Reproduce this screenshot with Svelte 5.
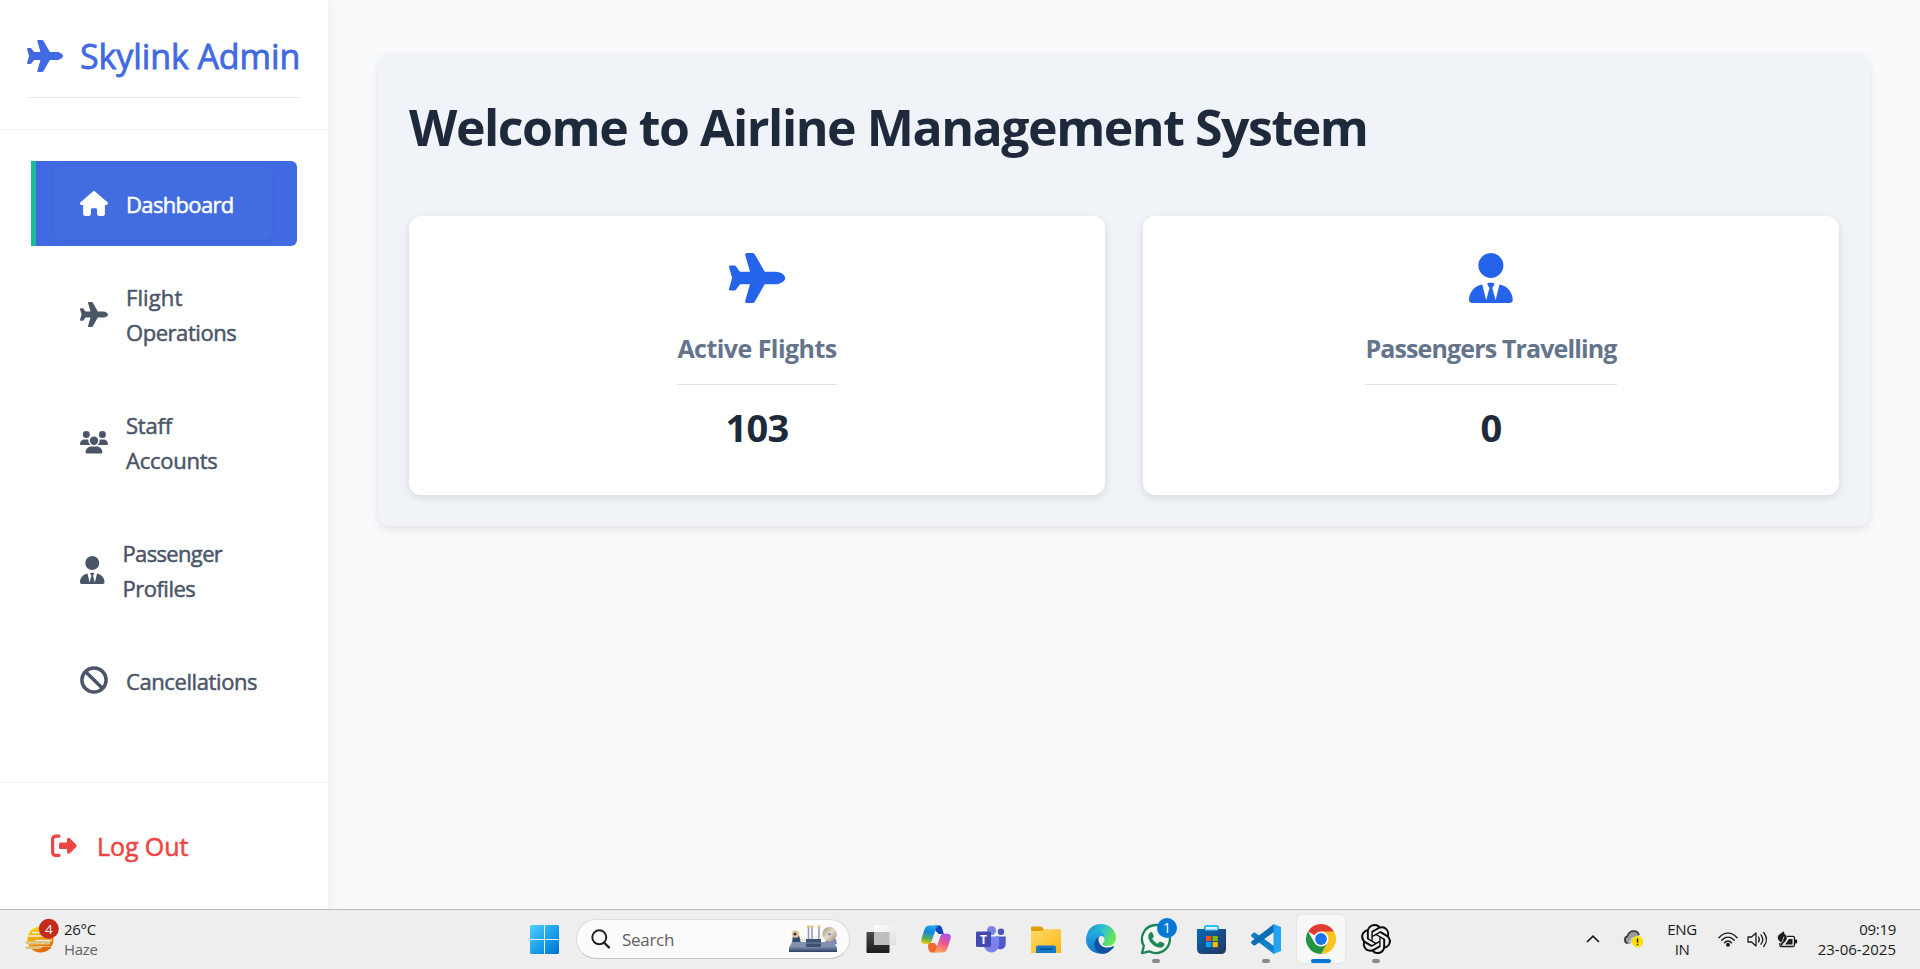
<script>
  const plane = 'M482.3 192c34.2 0 93.7 29 93.7 64c0 36-59.5 64-93.7 64l-116.6 0L265.2 495.9c-5.7 10-16.3 16.1-27.8 16.1l-56.2 0c-10.6 0-18.3-10.2-15.4-20.4l49-171.6L112 320 68.8 377.6c-3 4-7.8 6.4-12.8 6.4l-42 0c-7.8 0-14-6.3-14-14c0-1.3 .2-2.6 .5-3.9L32 256 .5 145.9c-.4-1.3-.5-2.6-.5-3.9c0-7.8 6.3-14 14-14l42 0c5 0 9.8 2.4 12.8 6.4L112 192l102.9 0-49-171.6C162.9 10.2 170.6 0 181.2 0l56.2 0c11.5 0 22.1 6.2 27.8 16.1L365.7 192l116.6 0z';
  const tie = 'M224 256A128 128 0 1 1 224 0a128 128 0 1 1 0 256zM209.1 359.2l-18.6-31c-6.4-10.7 1.3-24.2 13.7-24.2H224h19.7c12.4 0 20.1 13.6 13.7 24.2l-18.6 31 33.4 123.9 39.5-161.2c77.2 12 136.3 78.8 136.3 159.4c0 17-13.8 30.7-30.7 30.7H265.1 182.9 30.7C13.8 512 0 498.2 0 481.3c0-80.6 59.1-147.4 136.3-159.4l39.5 161.2 33.4-123.9z';
  const house = 'M575.8 255.5c0 18-15 32.1-32 32.1h-32l.7 160.2c0 2.7-.2 5.4-.5 8.1V472c0 22.1-17.9 40-40 40H456c-1.1 0-2.2 0-3.3-.1c-1.4 .1-2.8 .1-4.2 .1H416 392c-22.1 0-40-17.9-40-40V448 384c0-17.7-14.3-32-32-32H256c-17.7 0-32 14.3-32 32v64 24c0 22.1-17.9 40-40 40H160 128.1c-1.5 0-3-.1-4.5-.2c-1.2 .1-2.4 .2-3.6 .2H104c-22.1 0-40-17.9-40-40V360c0-.9 0-1.9 .1-2.8V287.6H32c-18 0-32-14-32-32.1c0-9 3-17 10-24L266.4 8c7-7 15-8 22-8s15 2 21 7L564.8 231.5c8 7 12 15 11 24z';
  const users = 'M144 0a80 80 0 1 1 0 160A80 80 0 1 1 144 0zM512 0a80 80 0 1 1 0 160A80 80 0 1 1 512 0zM0 298.7C0 239.8 47.8 192 106.7 192h42.7c15.9 0 31 3.5 44.6 9.7c-1.3 7.2-1.9 14.7-1.9 22.3c0 38.2 16.8 72.5 43.3 96c-.2 0-.4 0-.7 0H21.3C9.6 320 0 310.4 0 298.7zM405.3 320c-.2 0-.4 0-.7 0c26.6-23.5 43.3-57.8 43.3-96c0-7.6-.7-15-1.9-22.3c13.6-6.3 28.7-9.7 44.6-9.7h42.7C592.2 192 640 239.8 640 298.7c0 11.8-9.6 21.3-21.3 21.3H405.3zM224 224a96 96 0 1 1 192 0 96 96 0 1 1 -192 0zM128 485.3C128 411.7 187.7 352 261.3 352H378.7C452.3 352 512 411.7 512 485.3c0 14.7-11.9 26.7-26.7 26.7H154.7c-14.7 0-26.7-11.9-26.7-26.7z';
  const logout = 'M377.9 105.9L500.7 228.7c7.2 7.2 11.3 17.1 11.3 27.3s-4.1 20.1-11.3 27.3L377.9 406.1c-6.4 6.4-15 9.9-24 9.9c-18.7 0-33.9-15.2-33.9-33.9l0-62.1-128 0c-17.7 0-32-14.3-32-32l0-64c0-17.7 14.3-32 32-32l128 0 0-62.1c0-18.7 15.2-33.9 33.9-33.9c9 0 17.6 3.6 24 9.9zM160 96L96 96c-17.7 0-32 14.3-32 32l0 256c0 17.7 14.3 32 32 32l64 0c17.7 0 32 14.3 32 32s-14.3 32-32 32l-64 0c-53 0-96-43-96-96L0 128C0 75 43 32 96 32l64 0c17.7 0 32 14.3 32 32s-14.3 32-32 32z';

  const nav = [
    { lines: [['Dashboard', -0.65]], icon: house, box: '0 0 576 512', w: 28, h: 25, active: true },
    { lines: [['Flight', 0.1], ['Operations', -0.45]], icon: plane, box: '0 0 576 512', w: 28, h: 25 },
    { lines: [['Staff', -0.2], ['Accounts', -0.25]], icon: users, box: '0 0 640 512', w: 28, h: 22.4 },
    { lines: [['Passenger', -0.65], ['Profiles', -0.5]], icon: tie, box: '0 0 448 512', w: 24.5, h: 28 },
    { lines: [['Cancellations', -0.4]], ban: true, w: 28, h: 28 }
  ];

  const stats = [
    { label: 'Active Flights', value: '103', icon: plane, box: '0 0 576 512', w: 56.25 },
    { label: 'Passengers Travelling', value: '0', icon: tie, box: '0 0 448 512', w: 43.75 }
  ];
</script>

<div class="screen">
  <div class="app">
    <aside>
      <header>
        <div class="brand">
          <svg width="36" height="32" viewBox="0 0 576 512"><path d={plane} /></svg>
          <span>Skylink Admin</span>
        </div>
      </header>
      <nav>
        {#each nav as item}
          <a class:active={item.active} class="item">
            <span class="inner">
              {#if item.ban}
                <svg class="ban" width="28" height="28" viewBox="0 0 28 28" fill="none" stroke="currentColor" stroke-width="3.5"><circle cx="14" cy="14" r="12.1" /><path d="M5.4 5.4 22.6 22.6" /></svg>
              {:else}
                <svg width={item.w} height={item.h} viewBox={item.box}><path d={item.icon} /></svg>
              {/if}
              <span class="label">{#each item.lines as [text, tracking]}<span style:letter-spacing="{tracking}px">{text}</span>{/each}</span>
            </span>
          </a>
        {/each}
      </nav>
      <footer>
        <svg width="25.6" height="25.6" viewBox="0 0 512 512"><path d={logout} /></svg>
        <span>Log Out</span>
      </footer>
    </aside>
    <main>
      <section class="panel">
        <h1>Welcome to Airline Management System</h1>
        <div class="stats">
          {#each stats as s}
            <article>
              <svg width={s.w} height="50" viewBox={s.box}><path d={s.icon} /></svg>
              <h2 class:long={s.label.length > 15}>{s.label}</h2>
              <strong>{s.value}</strong>
            </article>
          {/each}
        </div>
      </section>
    </main>
  </div>

  <div class="taskbar">
    <div class="weather">
      <svg width="36" height="38" viewBox="0 0 36 38">
        <defs>
          <linearGradient id="sun" x1="0" y1="0" x2=".4" y2="1"><stop offset="0" stop-color="#fde000" /><stop offset="1" stop-color="#e46a09" /></linearGradient>
        </defs>
        <circle cx="15.5" cy="22.5" r="13" fill="url(#sun)" />
        <g stroke="#eee" stroke-width="1.7" stroke-linecap="round"><path d="M8 15.5h10M4 19h17M11 23.5h15M4 26.5h20M12 30h14" /></g>
        <g stroke="#dcc283" stroke-width="2.8" stroke-linecap="round"><path d="M2 25.5h14M2 30.7h12M19 25.5h5" /></g>
        <path d="M17 30.7h9" stroke="#df6b0b" stroke-width="2" />
        <circle cx="23.8" cy="11.8" r="10" fill="#c42b1c" />
        <text x="23.8" y="16.6" text-anchor="middle" fill="#fff" font-size="13.5">4</text>
      </svg>
      <div class="two"><span>26°C</span><span class="dim">Haze</span></div>
    </div>

    <div class="dock">
      <div class="slot">
        <svg width="29" height="29" viewBox="0 0 29 29">
          <defs><linearGradient id="win" gradientUnits="userSpaceOnUse" x1="0" y1="0" x2="29" y2="29"><stop offset="0" stop-color="#4fd0fc" /><stop offset=".6" stop-color="#149ae8" /><stop offset="1" stop-color="#0071ce" /></linearGradient></defs>
          <path fill="url(#win)" d="M1 0h13v14H0V1zM15 0h13l1 1v13H15zM0 15h14v14H1l-1-1zM15 15h14v13l-1 1H15z" />
        </svg>
      </div>
      <div class="search">
        <svg width="19" height="20" viewBox="0 0 19 20" fill="none" stroke="#222" stroke-width="2"><circle cx="8.3" cy="8.3" r="7" /><path d="m13 13.5 5 5" stroke-width="2.4" stroke-linecap="round" /></svg>
        <span>Search</span>
        <svg class="art" width="50" height="28" viewBox="0 0 50 28">
          <defs>
            <linearGradient id="base" x1="0" y1="0" x2="0" y2="1"><stop offset="0" stop-color="#7b8ba9" /><stop offset="1" stop-color="#2b4266" /></linearGradient>
            <linearGradient id="disc" x1="0" y1="0" x2="1" y2="1"><stop offset="0" stop-color="#9b8c72" /><stop offset=".5" stop-color="#e4dccb" /><stop offset="1" stop-color="#8f826d" /></linearGradient>
          </defs>
          <path d="M5 10h6l2 8H4z" fill="#344a6c" />
          <circle cx="7.5" cy="9" r="3.8" fill="#ddc99e" /><circle cx="7" cy="9" r="1.5" fill="#332d2b" />
          <path d="M12 14q3 3 6 0" fill="none" stroke="#d8c79f" />
          <path d="M20.5 2v13M24 2v13M31 2v13" stroke="#9099ad" stroke-width="1.5" />
          <path d="M19 1.6h6.5M29.5 1.6h3" stroke="#e7c47b" stroke-width="2" />
          <path d="M38 14h10l1 5H37z" fill="#7e8cab" />
          <circle cx="41.5" cy="9.2" r="7.2" fill="url(#disc)" /><circle cx="41.5" cy="9.2" r="1.8" fill="#c8c0d5" /><circle cx="41.5" cy="9.2" r=".8" fill="#4a3c66" />
          <path d="M4 17h42l3 6H1z" fill="#8390ac" />
          <path d="M18 14h15v8H18z" fill="#3c5275" /><path d="M18 18h15" stroke="#7687a7" />
          <path d="M1 22h48v5H1z" fill="url(#base)" />
        </svg>
      </div>
      <div class="slot">
        <svg width="30" height="30" viewBox="0 0 30 30">
          <defs><linearGradient id="tv" x1="0" y1="0" x2="0" y2="1"><stop offset="0" stop-color="#4c4b48" /><stop offset="1" stop-color="#1b1b1a" /></linearGradient><linearGradient id="tw" x1="0" y1="0" x2="1" y2="1"><stop offset="0" stop-color="#fff" /><stop offset="1" stop-color="#dedede" /></linearGradient></defs>
          <rect x=".5" y="8" width="23" height="21" rx="1" fill="url(#tv)" />
          <rect x="8" y="1" width="22" height="20" rx="1" fill="url(#tw)" /><rect x="8" y="8" width="15.5" height="13" fill="#bebebe" />
        </svg>
      </div>
      <div class="slot">
        <svg width="30" height="28" viewBox="0 0 30 28">
          <defs>
            <linearGradient id="c1" x1=".4" y1="0" x2=".2" y2="1"><stop offset="0" stop-color="#1aa5ed" /><stop offset=".35" stop-color="#1287dd" /><stop offset=".7" stop-color="#5aae57" /><stop offset="1" stop-color="#f5c509" /></linearGradient>
            <linearGradient id="c2" x1=".7" y1="0" x2=".4" y2="1"><stop offset="0" stop-color="#a950ec" /><stop offset=".5" stop-color="#ee5a8c" /><stop offset="1" stop-color="#fba263" /></linearGradient>
          </defs>
          <path d="M14 .5h3.500c3 0 3.500 2 4.200 4.500l1 4h-5L14 5z" fill="#1540bd" />
          <path d="M7 22.500 7.500 18h6l4 5-1.500 4.500h-5c-2.500 0-3.200-2.500-4-5z" fill="#f3682f" />
          <path d="M8.500.5H18c-2 .6-3 2.500-3.700 5L11 15.200c-1 3-2 3.600-5 3.600H3.500C.5 18.800-.2 16 .5 13.500L3.300 5C4.300 2 5.500.5 8.500.5z" fill="url(#c1)" />
          <path d="M21.500 27.500H12c2-.6 3-2.500 3.700-5L19 12.300c1-3 2-3.500 5-3.500h2.500c3 0 3.800 2.700 3 5.200L26.700 22.500c-1 3.400-2.200 5-5.200 5z" fill="url(#c2)" />
        </svg>
      </div>
      <div class="slot">
        <svg width="30" height="27" viewBox="0 0 30 27">
          <circle cx="25" cy="5.800" r="3.200" fill="#4b53bc" /><path d="M20 10.500h9.700v7.500a5.300 5.300 0 0 1-9.700 3z" fill="#5059c9" />
          <circle cx="15.500" cy="4.500" r="4.500" fill="#7b83eb" /><path d="M8 10.500h15V19a7.500 7.500 0 0 1-15 0z" fill="#7b83eb" />
          <rect x="0" y="5.500" width="15" height="15.500" rx="1.300" fill="#434ab0" />
          <text x="7.500" y="17.700" text-anchor="middle" font-size="12" font-weight="700" fill="#fff">T</text>
        </svg>
      </div>
      <div class="slot">
        <svg width="30" height="27" viewBox="0 0 30 27">
          <defs><linearGradient id="fo" x1="0" y1="0" x2="1" y2="1"><stop offset="0" stop-color="#ffdb68" /><stop offset="1" stop-color="#fbb514" /></linearGradient></defs>
          <path d="M0 6V1.500Q0 .5 1 .5h8.500q1 0 1.600.6L13 3.500V6z" fill="#dea006" />
          <path d="M0 5h10.500l2.500-1.800h17V27H0z" fill="url(#fo)" />
          <path d="M5 27v-5.500q0-2 2-2h16q2 0 2 2V27z" fill="#127ac9" /><path d="M8.500 23h13" stroke="#084c8b" stroke-width="1.400" />
        </svg>
      </div>
      <div class="slot">
        <svg width="30" height="30" viewBox="0 0 30 30">
          <defs>
            <linearGradient id="e1" x1="0" y1=".2" x2="1" y2=".6"><stop offset="0" stop-color="#138fd7" /><stop offset=".5" stop-color="#31c5cf" /><stop offset="1" stop-color="#6de947" /></linearGradient>
            <linearGradient id="e2" x1="0" y1="0" x2="0" y2="1"><stop offset="0" stop-color="#26aee2" /><stop offset="1" stop-color="#1470cd" /></linearGradient>
          </defs>
          <path d="M.5 12.500C1.600 4.500 8 0 15 0c9 0 15 6.500 15 13.500 0 5.500-4 8.500-8.500 8.500-3.500 0-5-1.200-5-2.100 0-.8 2-1.600 2-4.400 0-3-3-5-7-5-5 0-9.500 2-11 4z" fill="url(#e1)" />
          <path d="M0 15c.5-5 6-8 11-8 4.500 0 7.500 3.500 7.500 6-5-3-9 2-7 8 1.500 4.500 4 7.500 7.500 8.400C8 31.500-.5 24 0 15z" fill="url(#e2)" />
          <path d="M12.500 13c-3 2-5.500 5.500-3.500 10.500 1.500 4 5.500 6.500 9 6.200 4-.6 8-3.700 9.800-6.800.3-.7-.2-1-.8-.7-6 3-13 1-14.300-5-.4-1.800-.4-3 .6-4.400z" fill="#124f9c" />
        </svg>
      </div>
      <div class="slot dot">
        <svg width="38" height="38" viewBox="0 0 38 38">
          <path d="M5.600 33.600 7.400 26.500A14 14 0 1 1 12.800 31.800z" transform="translate(-.6 -.5)" fill="#f2f7f3" stroke="#1c8654" stroke-width="2.300" stroke-linejoin="round" />
          <path d="M13.400 12.300c.6-.5 1.600-.4 2 .4l1.300 3c.2.500 0 1-.4 1.500l-1.100 1.300c1.200 2.400 3 4 5.500 5.200l1.500-1.600c.4-.5.900-.6 1.500-.4l2.900 1.400c.8.400.9.900.7 1.600-.7 2.500-3.200 3.400-5.400 2.900-5.200-1.300-9.700-5.500-10.600-10.200-.3-2 .6-4 2.100-5.100z" fill="#1c8654" />
          <circle cx="30" cy="8" r="10" fill="#0078d4" class="badge" />
          <text x="30" y="13" text-anchor="middle" font-size="14" fill="#fff">1</text>
        </svg>
      </div>
      <div class="slot">
        <svg width="29" height="30" viewBox="0 0 29 30">
          <defs><linearGradient id="st" x1="0" y1="0" x2="1" y2="1"><stop offset="0" stop-color="#0767b9" /><stop offset="1" stop-color="#25345a" /></linearGradient></defs>
          <path d="M8 8V3q0-1 1-1h11q1 0 1 1v5" fill="none" stroke="#2dbff2" stroke-width="2" />
          <path d="M0 5h29v20q0 5-5 5H5q-5 0-5-5z" fill="url(#st)" />
          <path d="M8 5.700h13" stroke="#69dcfa" stroke-width="1.500" />
          <path d="M9 12h5.300v5H9z" fill="#f25022" /><path d="M15.500 12h5.300v5h-5.300z" fill="#7fba00" /><path d="M9 18h5.300v5.200H9z" fill="#00a4ef" /><path d="M15.500 18h5.300v5.200h-5.300z" fill="#ffb900" />
        </svg>
      </div>
      <div class="slot dot">
        <svg width="30" height="30" viewBox="0 0 30 30">
          <path d="m.5 10.500 2-1.700q.9-.7 1.800 0L23 22v8L.600 12.700q-1-1-.1-2.200z" fill="#0f7fca" />
          <path d="m.5 19.500 2 1.700q.9.700 1.800 0L23 8V0L.600 17.300q-1 1-.1 2.200z" fill="#0b6eb5" />
          <path d="M22.500 0 30 3v24l-7.500 3z" fill="#23a3f2" />
        </svg>
      </div>
      <div class="slot current dot">
        <svg width="30" height="30" viewBox="0 0 30 30">
          <path d="M15 15 2 7.500A15 15 0 0 1 28 7.500z" fill="#e23c30" />
          <path d="M15 7.500h13A15 15 0 0 1 15 30l6.500-11.300z" fill="#fcc31e" />
          <path d="M2 7.500A15 15 0 0 0 15 30l6.500-11.200L15 15 8.500 18.700z" fill="#229342" />
          <circle cx="15" cy="15" r="7.500" fill="#fff" /><circle cx="15" cy="15" r="5.900" fill="#1f73e8" />
        </svg>
      </div>
      <div class="slot dot">
        <svg width="30" height="30" viewBox="0 0 24 24"><path d="M22.282 9.821a5.985 5.985 0 0 0-.516-4.910 6.046 6.046 0 0 0-6.510-2.900A6.065 6.065 0 0 0 4.981 4.180a5.985 5.985 0 0 0-3.998 2.900 6.046 6.046 0 0 0 .743 7.097 5.980 5.980 0 0 0 .510 4.911 6.051 6.051 0 0 0 6.515 2.900A5.985 5.985 0 0 0 13.260 24a6.056 6.056 0 0 0 5.772-4.206 5.990 5.990 0 0 0 3.998-2.900 6.056 6.056 0 0 0-.748-7.073zM13.260 22.430a4.476 4.476 0 0 1-2.876-1.040l.141-.081 4.779-2.758a.795.795 0 0 0 .393-.681v-6.737l2.020 1.169a.071.071 0 0 1 .038.052v5.583a4.504 4.504 0 0 1-4.495 4.493zM3.600 18.304a4.470 4.470 0 0 1-.535-3.014l.142.085 4.783 2.759a.771.771 0 0 0 .780 0l5.843-3.369v2.332a.080.080 0 0 1-.033.062L9.740 19.950a4.500 4.500 0 0 1-6.140-1.646zM2.340 7.896a4.485 4.485 0 0 1 2.366-1.973V11.600a.766.766 0 0 0 .388.676l5.815 3.355-2.020 1.168a.076.076 0 0 1-.071 0l-4.830-2.786A4.504 4.504 0 0 1 2.340 7.872zm16.597 3.855l-5.833-3.387L15.119 7.200a.076.076 0 0 1 .071 0l4.830 2.791a4.494 4.494 0 0 1-.676 8.105v-5.678a.790.790 0 0 0-.407-.667zm2.010-3.023l-.141-.085-4.774-2.782a.776.776 0 0 0-.785 0L9.409 9.230V6.897a.066.066 0 0 1 .028-.061l4.830-2.787a4.500 4.500 0 0 1 6.680 4.660zm-12.640 4.135l-2.020-1.164a.080.080 0 0 1-.038-.057V6.075a4.500 4.500 0 0 1 7.375-3.453l-.142.080L8.704 5.460a.795.795 0 0 0-.393.681zm1.097-2.365l2.602-1.500 2.607 1.500v2.999l-2.597 1.500-2.607-1.500z" fill="#0a0a0a" /></svg>
      </div>
    </div>

    <div class="tray">
      <svg class="chev" width="14" height="8" viewBox="0 0 14 8" fill="none" stroke="#1b1b1b" stroke-width="1.700"><path d="m1 7 6-5.800L13 7" /></svg>
      <svg class="cloud" width="21" height="18" viewBox="0 0 21 18">
        <path d="M4 13.500a3.800 3.800 0 0 1 0-7.500c1-3.300 3.800-5 6.500-5 2.800 0 4.800 1.500 5.800 4l-9.500 9z" fill="#9a9a9a" />
        <path d="M4.500 13.500a4 4 0 0 1 0-7.500c1-3.300 3.500-5 6.200-5 2.500 0 4.500 1.500 5.500 4" fill="none" stroke="#303030" stroke-width="1.500" />
        <path d="M7 10q3-5 9-3l-3 5.500H5.500z" fill="#cfcfcf" />
        <circle cx="14.500" cy="11.700" r="5.700" fill="#fce100" /><path d="M14.500 8.500v4M14.500 13.800v1.500" stroke="#222" stroke-width="1.500" />
      </svg>
      <div class="two lang"><span>ENG</span><span>IN</span></div>
      <svg class="wifi" width="20" height="15" viewBox="0 0 20 15" fill="none" stroke="#1b1b1b" stroke-width="1.400" stroke-linecap="round"><path d="M1 5.800C6-.4 14-.4 19 5.800M3.800 8.300C7.300 4 12.700 4 16.200 8.300M6.500 10.800c2-2.500 5-2.500 7 0" /><circle cx="10" cy="12.800" r="1.300" fill="#1b1b1b" /></svg>
      <svg class="vol" width="21" height="17" viewBox="0 0 21 17" fill="none" stroke="#1b1b1b" stroke-width="1.300" stroke-linecap="round" stroke-linejoin="round"><path d="M1 6h3.500L9 2v13l-4.500-4H1zM11.500 6q1.700 2.500 0 5M14 3.800q3.500 4.700 0 9.400M16.700 1.500q5.500 7 0 14" /></svg>
      <svg class="bat" width="21" height="17" viewBox="0 0 21 17"><path d="M10 5.300h5.800q1.700 0 1.700 1.700v6.800q0 1.700-1.700 1.700H4.500q-1.700 0-1.700-1.700V12" fill="none" stroke="#1b1b1b" stroke-width="1.300" /><path d="M18 8.500h1q1.200 0 1.200 1v2q0 1-1.200 1h-1zM8 13.500l4-5.500h3.500v5.500zM4.500 11.500C-.5 9 0 4.500 3 3L6.800.2 7.500 3C11 5 10.500 9.500 6.500 12l-1.500 2.500-1.500-.5z" fill="#1b1b1b" /><path d="M7 5.500Q6 9 4.800 11.500" fill="none" stroke="#eee" stroke-width=".8" /></svg>
      <div class="two clock"><span>09:19</span><span class="date">23-06-2025</span></div>
    </div>
  </div>
</div>

<style>
  :global(body) { margin: 0; overflow: hidden; }
  .screen { width: 1920px; height: 969px; display: flex; flex-direction: column; font-family: 'Open Sans', 'Noto Sans', sans-serif; background: #f9fafc; }
  svg { display: block; flex: none; overflow: visible; }
  .app { flex: 1; min-height: 0; display: flex; }
  aside { width: 328px; box-sizing: border-box; flex: none; background: #fff; display: flex; flex-direction: column; box-shadow: 2px 0 12px rgba(0, 0, 0, .06); }
  aside svg path, article svg path { fill: currentColor; }
  header { box-sizing: border-box; height: 130px; padding: 27px; border-bottom: 1px solid #eef0f2; }
  .brand { box-sizing: border-box; height: 71px; display: flex; align-items: center; gap: 17px; padding-bottom: 12px; border-bottom: 1px solid #e9eaec; color: #4169e1; white-space: nowrap; }
  .brand span { font-size: 34px; line-height: 48px; letter-spacing: -.1px; -webkit-text-stroke: .8px currentColor; }
  nav { flex: 1; padding: 31px 31px 0; display: flex; flex-direction: column; gap: 8px; color: #4a5568; }
  .item { box-sizing: border-box; border-left: 5px solid transparent; border-radius: 6px; padding: 5px 25px 6px 18px; }
  .item.active { background: #4169e1; border-left-color: #1abc9c; color: #fff; border-radius: 0 6px 6px 0; }
  .active .inner { background: #416de0; border-radius: 8px; box-shadow: 0 2px 4px rgba(40, 70, 160, .08); }
  .inner { display: flex; align-items: center; gap: 18px; padding: 20px 0 19px 26px; }
  .label { display: flex; flex-direction: column; padding-top: 1px; margin-bottom: -1px; font-size: 22px; line-height: 35px; -webkit-text-stroke: .5px currentColor; white-space: nowrap; }
  .item:last-child path { fill: none; }
  .ban { margin-top: -2px; }
  footer { box-sizing: border-box; height: 127px; border-top: 1px solid #eceef0; padding-left: 51px; display: flex; align-items: center; gap: 20.500px; color: #ef4444; }
  footer span { font-size: 25px; letter-spacing: -.1px; -webkit-text-stroke: .55px currentColor; }
  main { flex: 1; padding: 54px 50px 0 50px; }
  .panel { box-sizing: border-box; height: 472px; padding: 35px 31px 31px 31px; background: #f0f4f9; border-radius: 12px; box-shadow: 0 3px 8px rgba(0, 0, 0, .1); }
  h1 { margin: 0 0 50px; height: 77px; line-height: 77px; font-size: 50px; font-weight: 700; color: #1e293b; letter-spacing: -1.460px; white-space: nowrap; }
  .stats { display: grid; grid-template-columns: 1fr 1fr; gap: 38px; }
  article { box-sizing: border-box; height: 279px; padding-top: 37px; display: flex; flex-direction: column; align-items: center; background: #fff; border-radius: 12px; box-shadow: 0 3px 8px rgba(0, 0, 0, .11); color: #2563eb; }
  h2 { margin: 25px 0 0; height: 57px; line-height: 41px; box-sizing: border-box; border-bottom: 1px solid #dfe1e5; font-size: 25px; font-weight: 700; color: #64748b; letter-spacing: -.550px; white-space: nowrap; }
  h2.long { letter-spacing: -.870px; }
  strong { margin-top: 16px; font-size: 38px; line-height: 52px; font-weight: 700; color: #1e293b; letter-spacing: -.7px; }
  .taskbar { box-sizing: border-box; height: 60px; flex: none; padding-bottom: 1px; border-top: 1px solid #b8bbbe; background: #eee; display: flex; align-items: center; color: #1b1b1b; }
  .weather { width: 512px; padding-left: 25px; box-sizing: border-box; display: flex; align-items: center; gap: 3px; }
  .weather svg { margin-top: -7px; }
  .weather .two { margin-top: -1px; letter-spacing: -.3px; }
  .two { display: flex; flex-direction: column; font-size: 15px; line-height: 20px; letter-spacing: -.5px; white-space: nowrap; }
  .dim { color: #636363; }
  .dock { display: flex; align-items: center; gap: 7px; margin-left: 8px; }
  .slot { width: 48px; height: 48px; display: flex; align-items: center; justify-content: center; border-radius: 5px; position: relative; }
  .slot:first-child { margin-right: 1px; }
  .current { background: #f8f8f8; box-shadow: 0 0 0 1px #e5e5e5; }
  .dot::after { content: ''; position: absolute; bottom: 0; left: 20px; width: 8px; height: 4px; border-radius: 2px; background: #8a8a8a; }
  .current::after { left: 14px; width: 20px; background: #0078d4; }
  .search { box-sizing: border-box; width: 274px; height: 40px; border: 1px solid #dcdcdc; border-bottom-color: #c5c5c5; border-radius: 20px; background: #fbfbfb; display: flex; align-items: center; padding: 0 11px 0 14px; }
  .search span { margin-left: 12px; font-size: 17px; letter-spacing: -.3px; color: #5f5f5f; }
  .art { margin-left: auto; }
  .tray { margin-left: auto; display: flex; align-items: center; padding-right: 24px; }
  .chev { margin-right: 23px; }
  .cloud { margin-right: 23px; }
  .lang { width: 30px; align-items: center; margin-right: 21px; letter-spacing: -.4px; }
  .wifi { margin-right: 9px; }
  .vol { margin-right: 9px; }
  .bat { margin-right: 21px; }
  .clock { align-items: flex-end; width: 77px; margin-top: -1px; letter-spacing: -.3px; }
  .date { letter-spacing: 0; }
</style>
